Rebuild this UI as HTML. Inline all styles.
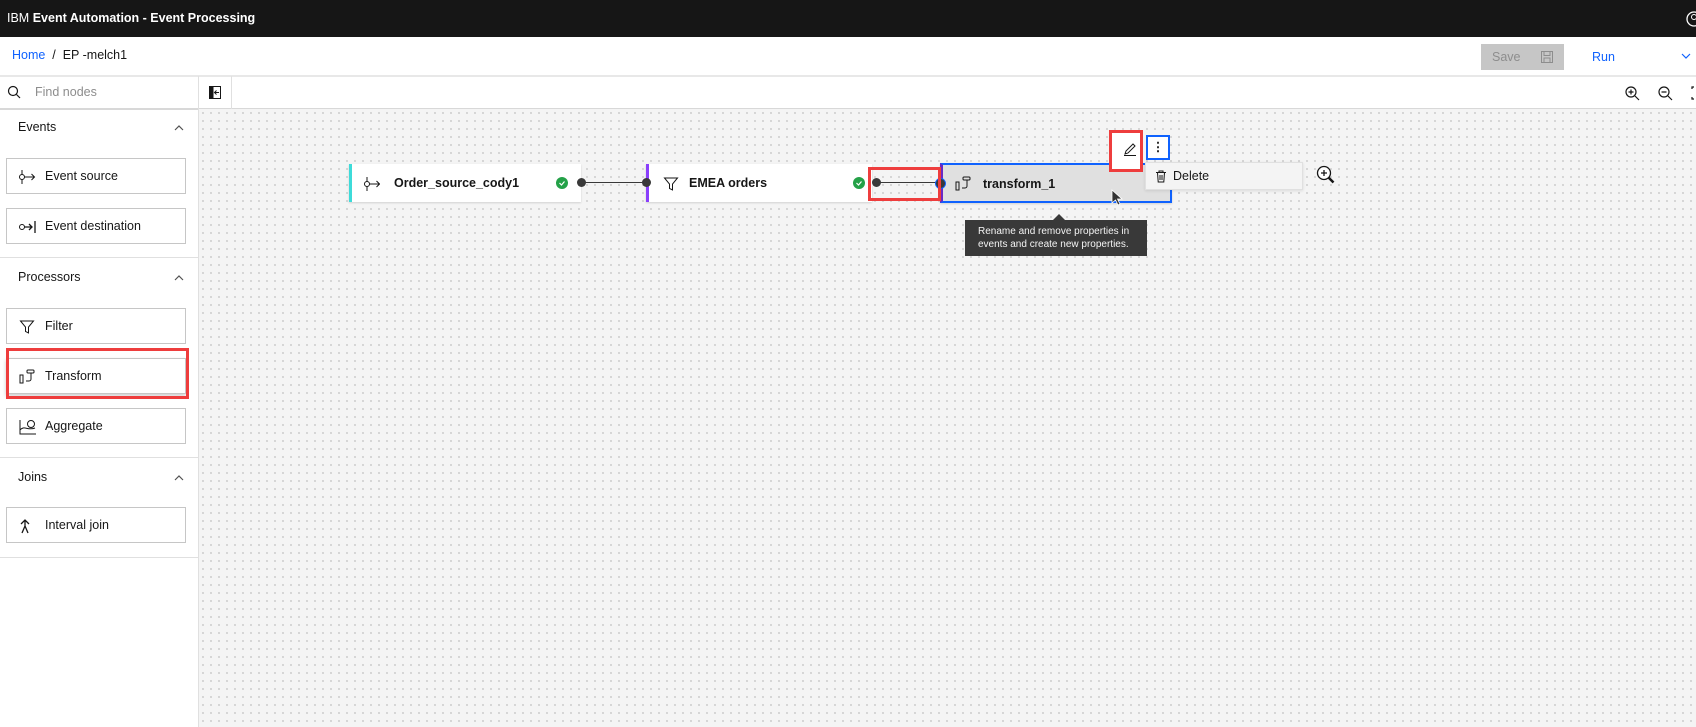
<!DOCTYPE html>
<html><head><meta charset="utf-8"><style>
*{box-sizing:border-box;margin:0;padding:0}
body{width:1696px;height:727px;overflow:hidden;font-family:"Liberation Sans",sans-serif;font-size:12.5px;color:#161616;background:#fff;position:relative}
.abs{position:absolute}
.hdr{left:0;top:0;width:1696px;height:37px;background:#161616;color:#fff;font-size:12.5px;line-height:37px;padding-left:7px}
.crumb{top:48px;left:12px;font-size:12.5px}
.canvas{left:199px;top:109px;width:1497px;height:618px;background-color:#f4f4f4;background-image:radial-gradient(#cdcdcd 0.8px,transparent 1.1px);background-size:8px 8px}
.card{position:absolute;left:6px;width:180px;height:36px;border:1px solid #c6c6c6;background:#fff;line-height:34px;padding-left:38px}
.card svg{position:absolute;left:12px;top:10px}
.sec{position:absolute;left:18px}
.chev{position:absolute;left:174px}
.div{position:absolute;left:0;width:199px;height:1px;background:#e0e0e0}
.node{position:absolute;height:38px;background:#fff;font-weight:bold;font-size:12.5px;line-height:38px;box-shadow:0 1px 2px rgba(0,0,0,.15)}
.dot{position:absolute;width:9px;height:9px;border-radius:50%;background:#393939}
.chk{position:absolute;width:12px;height:12px}
.red{position:absolute;border:3px solid #ee3d3d}
</style></head><body>
<div class="abs hdr">IBM <b>Event Automation - Event Processing</b></div>
<svg class="abs" style="left:1686px;top:11px" width="16" height="16"><circle cx="8" cy="8" r="7" fill="none" stroke="#fff" stroke-width="1.3"/><circle cx="8" cy="6" r="2.5" fill="none" stroke="#fff"/></svg>
<div class="abs crumb"><span style="color:#0f62fe">Home</span> &nbsp;/ &nbsp;EP -melch1</div>
<div class="abs" style="left:1481px;top:44px;width:83px;height:26px;background:#c6c6c6;color:#8d8d8d;line-height:26px;padding-left:11px">Save<svg style="position:absolute;left:60px;top:7px" width="12" height="12"><rect x="0.5" y="0.5" width="11" height="11" fill="none" stroke="#8d8d8d"/><rect x="3" y="0.5" width="6" height="4" fill="none" stroke="#8d8d8d"/><rect x="3" y="7" width="6" height="4.5" fill="none" stroke="#8d8d8d"/></svg></div>
<div class="abs" style="left:1592px;top:50px;color:#0f62fe">Run</div>
<svg class="abs" style="left:1681px;top:53px" width="10" height="6"><path d="M1 1l4 4 4-4" fill="none" stroke="#0f62fe" stroke-width="1.2"/></svg>
<div class="abs" style="left:0;top:75px;width:1696px;height:2px;background:#e8e8e8"></div>
<div class="abs" style="left:0;top:108px;width:1696px;height:2px;background:#d8d8d8"></div>
<div class="abs" style="left:198px;top:76px;width:1px;height:651px;background:#e0e0e0"></div>
<div class="abs" style="left:231px;top:76px;width:1px;height:33px;background:#e0e0e0"></div>
<svg class="abs" style="left:7px;top:85px" width="14" height="14"><circle cx="6" cy="6" r="4.5" fill="none" stroke="#161616" stroke-width="1.2"/><line x1="9.5" y1="9.5" x2="13" y2="13" stroke="#161616" stroke-width="1.2"/></svg>
<div class="abs" style="left:35px;top:85px;color:#8d8d8d">Find nodes</div>
<svg class="abs" style="left:209px;top:86px" width="12" height="13"><rect x="0.5" y="0.5" width="11" height="12" fill="none" stroke="#161616"/><rect x="0.5" y="0.5" width="4" height="12" fill="#161616"/><path d="M10 6.5H6M7.5 4.5L5.5 6.5 7.5 8.5" stroke="#161616" fill="none"/></svg>
<svg class="abs" style="left:1624px;top:85px" width="80" height="16" fill="none" stroke="#161616" stroke-width="1.2"><circle cx="7" cy="7" r="5"/><path d="M11 11l4 4M4.5 7h5M7 4.5v5"/><circle cx="40" cy="7" r="5"/><path d="M44 11l4 4M37.5 7h5"/><path d="M70 2h-2v2M70 14h-2v-2"/></svg>
<div class="sec" style="top:120px">Events</div><svg class="chev" style="top:125px" width="10" height="6"><path d="M1 5l4-4 4 4" fill="none" stroke="#525252" stroke-width="1.2"/></svg>
<div class="card" style="top:158px"><svg width="18" height="16"><circle cx="3" cy="8" r="2.5" fill="none" stroke="#161616"/><path d="M3 1v4.5M3 10.5V15M5.5 8h10M12.5 5l3 3-3 3" stroke="#161616" fill="none"/></svg>Event source</div>
<div class="card" style="top:208px"><svg width="18" height="16"><circle cx="3" cy="8" r="2.5" fill="none" stroke="#161616"/><path d="M5.5 8h7M10 5l3 3-3 3M16 2v12" stroke="#161616" fill="none" stroke-width="1.3"/></svg>Event destination</div>
<div class="div" style="top:257px"></div>
<div class="sec" style="top:270px">Processors</div><svg class="chev" style="top:275px" width="10" height="6"><path d="M1 5l4-4 4 4" fill="none" stroke="#525252" stroke-width="1.2"/></svg>
<div class="card" style="top:308px"><svg width="16" height="16"><path d="M1.5 2h13l-5 6v6l-3-1.5V8z" fill="none" stroke="#161616"/></svg>Filter</div>
<div class="card" style="top:358px;box-shadow:0 2px 4px rgba(0,0,0,.2)"><svg width="16" height="16"><rect x="1" y="6" width="3" height="8" fill="none" stroke="#161616"/><rect x="8" y="1" width="7" height="3" rx="1" fill="none" stroke="#161616"/><path d="M12 4v6a2 2 0 0 1-2 2H7" fill="none" stroke="#161616"/></svg>Transform</div>
<div class="red" style="left:6px;top:348px;width:183px;height:51px"></div>
<div class="card" style="top:408px"><svg width="18" height="16"><path d="M1 1v14h16M1 11c4-5 8 1 15-2" fill="none" stroke="#161616"/><circle cx="12" cy="5" r="3.5" fill="none" stroke="#161616"/></svg>Aggregate</div>
<div class="div" style="top:457px"></div>
<div class="sec" style="top:470px">Joins</div><svg class="chev" style="top:475px" width="10" height="6"><path d="M1 5l4-4 4 4" fill="none" stroke="#525252" stroke-width="1.2"/></svg>
<div class="card" style="top:507px"><svg width="14" height="16"><path d="M2 6l4-4 4 4M6 2v6M3 15l3-7 3 7" fill="none" stroke="#161616" stroke-width="1.3"/></svg>Interval join</div>
<div class="div" style="top:557px"></div>
<div class="abs canvas"></div>
<div class="node" style="left:349px;top:164px;width:232px;border-left:3px solid #3ddbd9;padding-left:42px">Order_source_cody1<svg style="position:absolute;left:12px;top:12px" width="16" height="16"><circle cx="3" cy="8" r="2.5" fill="none" stroke="#161616"/><path d="M3 1v4.5M3 10.5V15M5.5 8h10M12.5 5l3 3-3 3" stroke="#161616" fill="none"/></svg></div>
<svg class="chk" style="left:556px;top:177px"><circle cx="6" cy="6" r="6" fill="#24a148"/><path d="M3.5 6l2 2 3-3.5" fill="none" stroke="#fff" stroke-width="1.2"/></svg>
<div class="abs" style="left:585px;top:182px;width:61px;height:1px;background:#393939"></div>
<div class="dot" style="left:577px;top:178px"></div>
<div class="node" style="left:646px;top:164px;width:226px;border-left:3px solid #8a3ffc;padding-left:40px">EMEA orders<svg style="position:absolute;left:14px;top:12px" width="16" height="16"><path d="M1.5 2h13l-5 6v6l-3-1.5V8z" fill="none" stroke="#161616"/></svg></div>
<div class="dot" style="left:642px;top:178px"></div>
<svg class="chk" style="left:853px;top:177px"><circle cx="6" cy="6" r="6" fill="#24a148"/><path d="M3.5 6l2 2 3-3.5" fill="none" stroke="#fff" stroke-width="1.2"/></svg>
<div class="abs" style="left:876px;top:182px;width:62px;height:1px;background:#393939"></div>
<div class="dot" style="left:872px;top:178px"></div>
<div class="node" style="left:940px;top:163px;width:232px;height:40px;background:#e0e0e0;border:2px solid #0f62fe;border-left:3px solid #6929c4;padding-left:40px">transform_1<svg style="position:absolute;left:12px;top:11px" width="16" height="16"><rect x="1" y="6" width="3" height="8" fill="none" stroke="#161616"/><rect x="8" y="1" width="7" height="3" rx="1" fill="none" stroke="#161616"/><path d="M12 4v6a2 2 0 0 1-2 2H7" fill="none" stroke="#161616"/></svg></div>
<div class="dot" style="left:935px;top:178px;width:11px;height:11px;border:1.5px solid #0f62fe"></div>
<div class="red" style="left:868px;top:167px;width:73px;height:34px"></div>
<svg class="abs" style="left:1111px;top:189px" width="14" height="18"><path d="M1 1v13l3.5-3 2.5 5 2-1-2.5-5H11z" fill="#333" stroke="#fff" stroke-width="0.8"/></svg>
<div class="abs" style="left:1112px;top:133px;width:28px;height:36px;background:#fff"></div>
<svg class="abs" style="left:1123px;top:142px" width="14" height="14"><path d="M2 12l1-3 7-7 2 2-7 7zM1 13.5h12" fill="none" stroke="#161616"/></svg>
<div class="red" style="left:1109px;top:130px;width:34px;height:42px"></div>
<div class="abs" style="left:1146px;top:135px;width:24px;height:25px;background:#fff;border:2px solid #0f62fe;text-align:center;line-height:20px;font-weight:bold">&#8942;</div>
<div class="abs" style="left:1145px;top:162px;width:158px;height:28px;background:#f4f4f4;border:1px solid #e0e0e0;box-shadow:0 1px 3px rgba(0,0,0,.1);line-height:26px;padding-left:27px">Delete<svg style="position:absolute;left:9px;top:7px" width="12" height="13"><path d="M1 2.5h10M4 2.5V1h4v1.5M2.5 2.5l.7 9.5h5.6l.7-9.5M5 5v5M7 5v5" fill="none" stroke="#161616"/></svg></div>
<svg class="abs" style="left:1316px;top:165px" width="20" height="20"><circle cx="8" cy="8" r="6.5" fill="#fff" stroke="#161616" stroke-width="1.3"/><path d="M5 8h6M8 5v6" stroke="#161616" stroke-width="1.3"/><path d="M12.5 12.5l5 5" stroke="#161616" stroke-width="2.5"/></svg>
<div class="abs" style="left:965px;top:220px;width:182px;height:36px;background:#393939;color:#f4f4f4;font-size:10px;line-height:13px;padding:5px 0 0 13px">Rename and remove properties in<br>events and create new properties.</div>
<div class="abs" style="left:1053px;top:214px;width:0;height:0;border-left:6px solid transparent;border-right:6px solid transparent;border-bottom:6px solid #393939"></div>
</body></html>
